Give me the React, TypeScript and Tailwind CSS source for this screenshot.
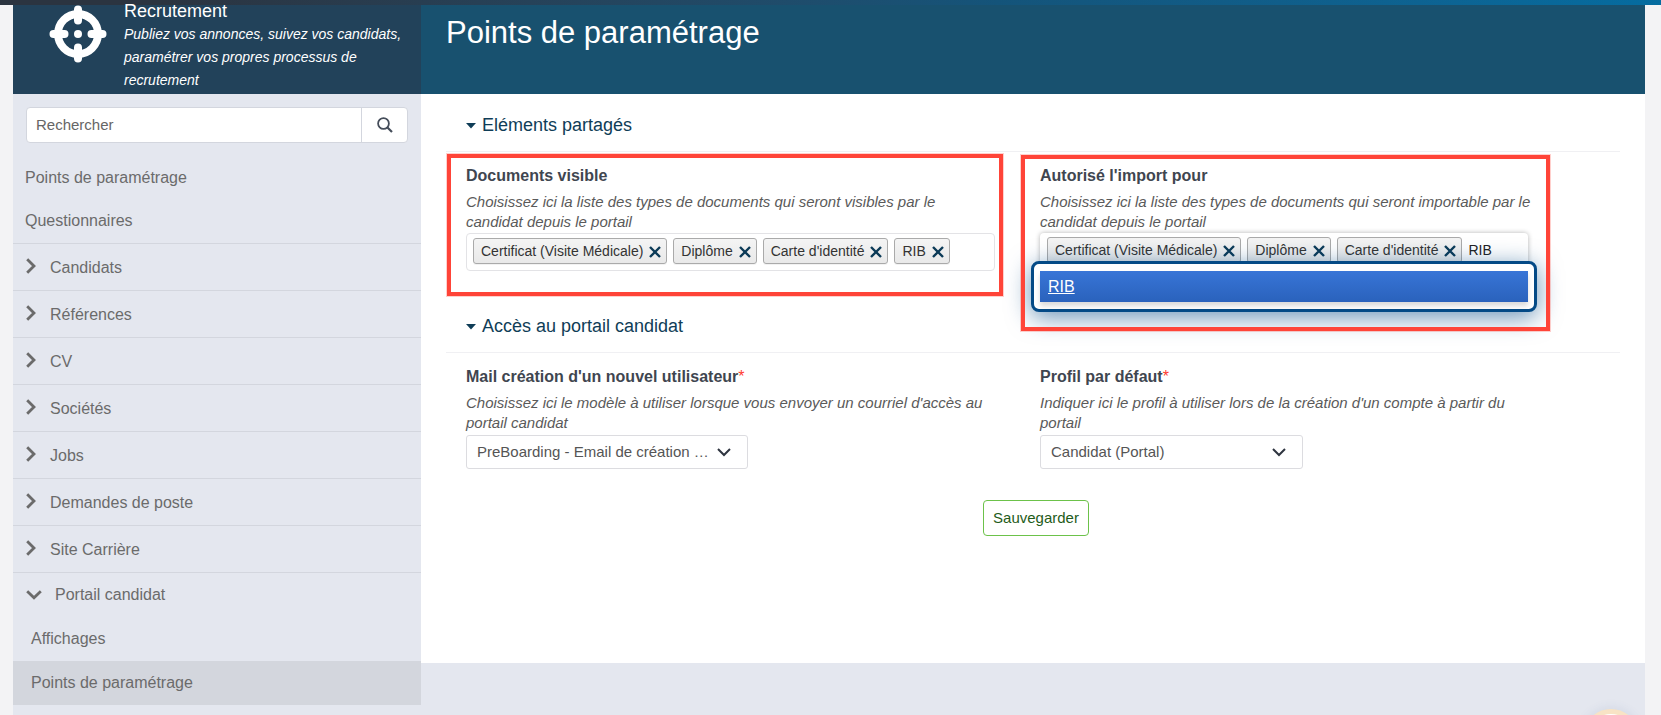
import React from "react";

const BoldChevron = ({ open }: { open?: boolean }) =>
  open ? (
    <svg viewBox="0 0 16 10" className="h-[10px] w-4 shrink-0" fill="none" stroke="currentColor" strokeWidth="2.8">
      <path d="M1.2 1.2 8 7.8 14.8 1.2" />
    </svg>
  ) : (
    <svg viewBox="0 0 10 16" className="h-4 w-[10px] shrink-0" fill="none" stroke="currentColor" strokeWidth="2.8">
      <path d="M1.2 1.2 8 8 1.2 14.8" />
    </svg>
  );

const Crosshair = () => (
  <svg viewBox="0 0 58 58" className="h-[58px] w-[58px]" fill="none" stroke="#fff">
    <circle cx="29" cy="29" r="20" strokeWidth="7.8" />
    <path d="M29 4.500V15.500M29 42.500v11M4.500 29h11M42.500 29h11" strokeWidth="8" strokeLinecap="round" />
    <circle cx="29" cy="29" r="4" fill="#fff" stroke="none" />
  </svg>
);

const Tag = ({ text }: { text: string }) => (
  <li className="flex h-[26px] shrink-0 items-center gap-[6px] rounded-[3px] border border-[#aaa] bg-linear-to-b from-[#f4f4f4] to-[#e9e9e9] pr-[5px] pl-[7px] text-sm text-[#333] shadow-[0_1px_0_rgba(0,0,0,0.05)]">
    <span className="whitespace-nowrap">{text}</span>
    <button type="button" aria-label={`Retirer ${text}`} className="text-[#0b3a57]">
      <svg viewBox="0 0 12 12" className="mt-[2px] h-3 w-3" fill="none" stroke="currentColor" strokeWidth="2.400">
        <path d="M1 1 11 11M11 1 1 11" />
      </svg>
    </button>
  </li>
);

const Section = ({ title, children }: { title: string; children: React.ReactNode }) => (
  <section>
    <div className="border-b border-[#f0f0f3] pl-5">
      <button type="button" aria-expanded="true" className="flex h-[57px] items-center gap-[6px] pt-1 text-lg text-[#0f3d57]">
        <svg viewBox="0 0 10 6" className="mt-[2px] h-[6px] w-[10px]" fill="currentColor">
          <path d="M0 0h10L5 5.500z" />
        </svg>
        {title}
      </button>
    </div>
    <div className="grid grid-cols-2 pr-[6px] pl-5">{children}</div>
  </section>
);

const Field = ({
  id,
  label,
  help,
  required,
  className,
  children,
}: {
  id: string;
  label: string;
  help: string;
  required?: boolean;
  className: string;
  children: React.ReactNode;
}) => (
  <div className={`relative pt-[14px] ${className}`}>
    <label htmlFor={id} className="block text-base leading-5 font-bold text-[#3f4650]">
      {label}
      {required && <span className="font-normal text-[#ff3b30]">*</span>}
    </label>
    <p className="mt-[6px] text-[15px] leading-5 text-[#5a5a5a] italic">{help}</p>
    {children}
  </div>
);

const Select = ({ id, value, className }: { id: string; value: string; className: string }) => (
  <div className={`relative mt-[2px] ${className}`}>
    <select
      id={id}
      className="h-[34px] w-full appearance-none truncate rounded-[3px] border border-[#dcdce0] bg-white pr-9 pl-[10px] text-[15px] text-[#555]"
    >
      <option>{value}</option>
    </select>
    <svg
      viewBox="0 0 14 9"
      className="pointer-events-none absolute top-[13px] right-[17px] h-[9px] w-[14px]"
      fill="none"
      stroke="#2f3540"
      strokeWidth="2"
    >
      <path d="M1 1 7 7 13 1" />
    </svg>
  </div>
);

const groups = ["Candidats", "Références", "CV", "Sociétés", "Jobs", "Demandes de poste", "Site Carrière"];
const documents = ["Certificat (Visite Médicale)", "Diplôme", "Carte d'identité"];

export default function App() {
  return (
    <div className="relative flex h-screen flex-col overflow-hidden bg-[#f3f3f5] font-['Liberation_Sans',Arial,sans-serif]">
      <div className="h-[5px] shrink-0 bg-linear-to-r from-[#2b3440] from-10% via-[#14547a] via-60% to-[#056ca0]" />
      <div className="mr-4 ml-[13px] flex grow bg-[#e4e7ef]">
        <aside className="w-[408px] shrink-0 text-[#6b6b6b]">
          <div className="flex h-[89px] bg-[#22425a] pl-9 text-white">
            <Crosshair />
            <div className="ml-[17px] w-[290px]">
              <h2 className="mb-[6px] text-lg leading-3">Recrutement</h2>
              <p className="text-[14px] leading-[23px] italic">
                Publiez vos annonces, suivez vos candidats, paramétrer vos propres processus de recrutement
              </p>
            </div>
          </div>
          <form className="mx-[13px] mt-[13px] mb-[13px] flex h-9 overflow-hidden rounded-[4px] border border-[#d3d6de] bg-white">
            <input
              type="text"
              aria-label="Rechercher"
              placeholder="Rechercher"
              className="min-w-0 grow px-[9px] text-[15px] placeholder:text-[#666]"
            />
            <button type="button" aria-label="Lancer la recherche" className="flex w-[46px] items-center justify-center border-l border-[#d3d6de]">
              <svg viewBox="0 0 16 16" className="h-4 w-4" fill="none" stroke="#454d5a" strokeWidth="1.800">
                <circle cx="6.500" cy="6.500" r="5.400" />
                <path d="M10.500 10.500 15 15" strokeWidth="2.200" />
              </svg>
            </button>
          </form>
          <nav>
            <a href="#parametrage" className="flex h-[43px] items-center px-3">Points de paramétrage</a>
            <a href="#questionnaires" className="flex h-11 items-center px-3">Questionnaires</a>
            {groups.map((g) => (
              <button key={g} type="button" aria-expanded="false" className="flex h-[47px] w-full items-center gap-[14px] border-t border-[#d3d6de] px-[13px] pt-[2px]">
                <span className="-mt-[5px]"><BoldChevron /></span>
                {g}
              </button>
            ))}
            <button type="button" aria-expanded="true" className="flex h-[45px] w-full items-center gap-[13px] border-t border-[#d3d6de] px-[13px]">
              <BoldChevron open />
              Portail candidat
            </button>
            <a href="#affichages" className="flex h-11 items-center px-[18px]">Affichages</a>
            <a href="#portail-parametrage" aria-current="page" className="flex h-11 items-center bg-[#d3d6dd] px-[18px]">
              Points de paramétrage
            </a>
          </nav>
        </aside>
        <main className="min-w-0 grow">
          <header className="h-[89px] bg-[#18516f] px-[25px] pt-[10px]">
            <h1 className="text-[31px] leading-9 text-white">Points de paramétrage</h1>
          </header>
          <div className="h-[569px] bg-white pr-[25px] pl-[25px]">
            <Section title="Eléments partagés">
              <Field id="docs" className="mr-[45px]" label="Documents visible" help="Choisissez ici la liste des types de documents qui seront visibles par le candidat depuis le portail">
                <ul id="docs" className="mt-[1px] flex h-[38px] items-start gap-[6px] rounded-[4px] border border-[#e3e3e6] px-[6px] pt-1">
                  {[...documents, "RIB"].map((d) => (
                    <Tag key={d} text={d} />
                  ))}
                </ul>
                <div className="pointer-events-none absolute top-[2px] -right-2 -left-[19px] h-[142px] border-4 border-[#ff4438] ring-1 ring-[#ff4438]/25" />
              </Field>
              <Field id="import" className="mr-[74px]" label="Autorisé l'import pour" help="Choisissez ici la liste des types de documents qui seront importable par le candidat depuis le portail">
                <div className="relative mt-[1px] mr-3">
                  <ul className="flex h-[38px] items-start gap-[6px] rounded-[4px] px-[7px] pt-1 shadow-[0_0_5px_rgba(0,0,0,0.3)]">
                    {documents.map((d) => (
                      <Tag key={d} text={d} />
                    ))}
                    <li className="min-w-0 grow">
                      <input id="import" defaultValue="RIB" className="h-[26px] w-full text-sm text-[#222] outline-none" />
                    </li>
                  </ul>
                  <div className="absolute top-7 -right-[9px] -left-[9px] h-[51px] rounded-[8px] border-[3px] border-[#044a86] bg-white px-[6px] pt-[7px] shadow-[0_5px_25px_rgba(4,74,134,0.6)]">
                    <button type="button" className="flex h-[31px] w-full items-center bg-linear-to-b from-[#3875d7] to-[#2a62bc] px-2 text-base text-white underline shadow-[0_4px_5px_rgba(0,0,0,0.15)]">
                      RIB
                    </button>
                  </div>
                </div>
                <div className="pointer-events-none absolute top-[3px] -right-[10px] -left-[19px] h-[176px] border-4 border-[#ff4438] ring-1 ring-[#ff4438]/25" />
              </Field>
            </Section>
            <div className="h-6" />
            <Section title="Accès au portail candidat">
              <Field id="mail" className="mr-[45px]" required label="Mail création d'un nouvel utilisateur" help="Choisissez ici le modèle à utiliser lorsque vous envoyer un courriel d'accès au portail candidat">
                <Select id="mail" value="PreBoarding - Email de création d'un compte" className="w-[282px]" />
              </Field>
              <Field id="profil" className="mr-[74px]" required label="Profil par défaut" help="Indiquer ici le profil à utiliser lors de la création d'un compte à partir du portail">
                <Select id="profil" value="Candidat (Portal)" className="w-[263px]" />
              </Field>
            </Section>
            <div className="mt-[31px] flex justify-center pl-[6px]">
              <button type="button" className="h-9 rounded-[4px] border border-[#6cc24a] bg-white px-[9px] text-[15px] text-[#1f5c1a]">
                Sauvegarder
              </button>
            </div>
          </div>
        </main>
      </div>
      <div className="absolute right-[22px] -bottom-[50px] h-14 w-14 rounded-full border-[5px] border-[#f8e3c5] bg-white shadow-[0_0_12px_rgba(60,80,140,0.12)]" />
    </div>
  );
}
